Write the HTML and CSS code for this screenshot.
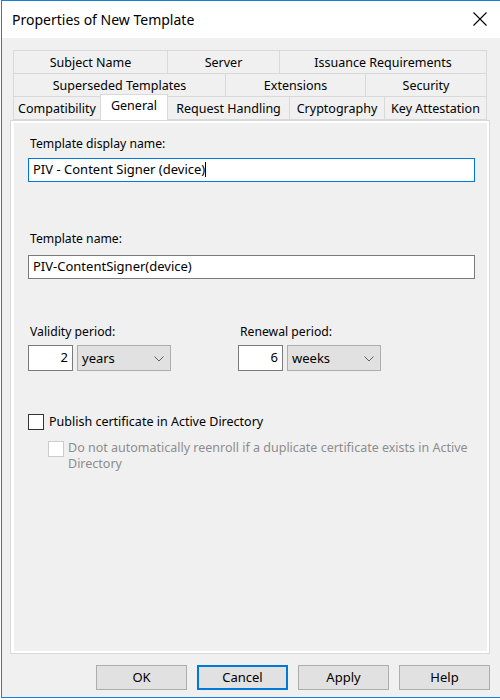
FILE: index.html
```html
<!DOCTYPE html>
<html>
<head>
<meta charset="utf-8">
<link rel="stylesheet" href="styles.css">
</head>
<body>
<div class="window">
  <div class="titlebar">
    <span class="title">Properties of New Template</span>
    <svg class="close" width="16" height="16" viewBox="0 0 16 16"><path d="M1.5 1.5 L14.5 14.5 M14.5 1.5 L1.5 14.5" stroke="#000" stroke-width="1.1" fill="none"/></svg>
  </div>
  <div class="body">
    <div class="tabs">
      <div class="tabrow row1">
        <div class="tab">Subject Name</div>
        <div class="tab">Server</div>
        <div class="tab">Issuance Requirements</div>
      </div>
      <div class="tabrow row2">
        <div class="tab">Superseded Templates</div>
        <div class="tab">Extensions</div>
        <div class="tab">Security</div>
      </div>
      <div class="tabrow row3">
        <div class="tab">Compatibility</div>
        <div class="tab selected">General</div>
        <div class="tab">Request Handling</div>
        <div class="tab">Cryptography</div>
        <div class="tab">Key Attestation</div>
      </div>
    </div>
    <div class="panel">
      <div class="page">
        <div class="label l1">Template display name:</div>
        <div class="textbox focused">PIV - Content Signer (device)<span class="caret"></span></div>
        <div class="label l2">Template name:</div>
        <div class="textbox tb2">PIV-ContentSigner(device)</div>
        <div class="periods">
          <div class="period">
            <div class="label">Validity period:</div>
            <div class="ctrls">
              <div class="num">2</div>
              <div class="combo"><span>years</span><svg width="10" height="6" viewBox="0 0 10 6"><path d="M0.5 0.5 L5 5 L9.5 0.5" stroke="#606060" stroke-width="1" fill="none"/></svg></div>
            </div>
          </div>
          <div class="period">
            <div class="label">Renewal period:</div>
            <div class="ctrls">
              <div class="num">6</div>
              <div class="combo"><span>weeks</span><svg width="10" height="6" viewBox="0 0 10 6"><path d="M0.5 0.5 L5 5 L9.5 0.5" stroke="#606060" stroke-width="1" fill="none"/></svg></div>
            </div>
          </div>
        </div>
        <div class="check">
          <span class="box"></span>
          <span class="ctext">Publish certificate in Active Directory</span>
        </div>
        <div class="check disabled">
          <span class="box"></span>
          <span class="ctext">Do not automatically reenroll if a duplicate certificate exists in Active Directory</span>
        </div>
      </div>
    </div>
    <div class="buttons">
      <div class="btn">OK</div>
      <div class="btn default">Cancel</div>
      <div class="btn">Apply</div>
      <div class="btn">Help</div>
    </div>
  </div>
</div>
</body>
</html>
```
FILE: styles.css
```css
html, body {
  margin: 0;
  padding: 0;
  background: #ffffff;
}
body {
  font-family: "Noto Sans", "Liberation Sans", sans-serif;
  font-size: 12px;
  color: #000;
  width: 500px;
  height: 700px;
  overflow: hidden;
}
.window {
  margin-left: 1px;
  width: 520px;
  height: 698px;
  border-left: 1px solid #1a7fd4;
  border-top: 1px solid #1a7fd4;
  border-bottom: 1px solid #1a7fd4;
  background: #f0f0f0;
  box-sizing: border-box;
  display: flex;
  flex-direction: column;
}
.titlebar {
  height: 37px;
  background: #fff;
  display: flex;
  align-items: center;
  position: relative;
}
.title {
  font-size: 14px;
  margin-left: 10px;
  margin-top: -1px;
}
.close {
  position: absolute;
  left: 470px;
  top: 10px;
}
.body {
  padding: 12px 0 0 8px;
  flex: 1;
  display: flex;
  flex-direction: column;
}
.tabs {
  margin-left: 3px;
  width: 474px;
}
.tabrow {
  display: grid;
  background: #d9d9d9;
  gap: 1px;
  padding: 1px 1px 0 1px;
}
.row1 { grid-template-columns: 153px 111px 206px; }
.row2 { grid-template-columns: 211px 139px 120px; }
.row3 { grid-template-columns: 86px 66px 121px 94px 101px; }
.tab {
  background: #f0f0f0;
  height: 22px;
  line-height: 23px;
  text-align: center;
  white-space: nowrap;
  color: #000;
  font-size: 12.5px;
}
.tab.selected {
  position: relative;
  z-index: 1;
  background: #fff;
  margin: -3px -1px 0 -1px;
  height: 26px;
  border: 1px solid #d9d9d9;
  border-bottom: none;
  box-sizing: border-box;
  line-height: 22px;
}
.panel {
  width: 480px;
  height: 534px;
  box-sizing: border-box;
  border: 1px solid #d9d9d9;
  background: #fff;
  padding: 2px 2px 2px 3px;
}
.page {
  background: #f0f0f0;
  height: 100%;
  padding: 12px 0 0 14px;
  box-sizing: border-box;
}
.label {
  height: 17px;
  line-height: 17px;
  margin-left: 2px;
  white-space: nowrap;
  font-size: 12.2px;
}
.textbox {
  width: 447px;
  height: 24px;
  box-sizing: border-box;
  border: 1px solid #7a7a7a;
  background: #fff;
  line-height: 21px;
  padding-left: 4px;
  white-space: nowrap;
  font-size: 13px;
}
.textbox.focused {
  border-color: #0078d7;
  margin-top: 6px;
}
.caret {
  display: inline-block;
  width: 1px;
  height: 15px;
  background: #000;
  vertical-align: -3px;
}
.l2 { margin-top: 48px; }
.tb2 { margin-top: 8px; }
.periods {
  display: flex;
  margin-top: 44px;
}
.period {
  width: 210px;
}
.ctrls {
  display: flex;
  gap: 4px;
  margin-top: 5px;
}
.num {
  width: 45px;
  height: 26px;
  box-sizing: border-box;
  border: 1px solid #7a7a7a;
  background: #fff;
  text-align: right;
  padding-right: 4px;
  line-height: 23px;
  font-size: 13px;
}
.combo {
  width: 94px;
  height: 26px;
  box-sizing: border-box;
  border: 1px solid #adadad;
  background: #e1e1e1;
  display: flex;
  align-items: center;
  justify-content: space-between;
  padding: 0 6px 0 4px;
  font-size: 13px;
}
.combo svg { margin-top: 1px; }
.check {
  display: flex;
  align-items: flex-start;
  margin-top: 43px;
}
.check .box {
  width: 16px;
  height: 16px;
  box-sizing: border-box;
  border: 1px solid #333;
  background: #fff;
  flex: none;
}
.check .ctext {
  margin-left: 5px;
  line-height: 16px;
  font-size: 12.5px;
}
.check.disabled {
  margin-top: 10px;
  margin-left: 20px;
}
.check.disabled .box {
  border-color: #cccccc;
  margin-top: 1px;
}
.check.disabled .ctext {
  color: #8d8d8d;
  line-height: 16px;
  width: 405px;
  margin-left: 4px;
  font-size: 12.5px;
}
.buttons {
  display: flex;
  gap: 10px;
  margin-top: 11px;
  margin-left: 86px;
}
.btn {
  width: 91px;
  height: 25px;
  box-sizing: border-box;
  border: 1px solid #adadad;
  background: #e1e1e1;
  text-align: center;
  line-height: 23px;
  font-size: 13px;
}
.btn.default {
  border: 2px solid #0078d7;
  line-height: 21px;
}
```
